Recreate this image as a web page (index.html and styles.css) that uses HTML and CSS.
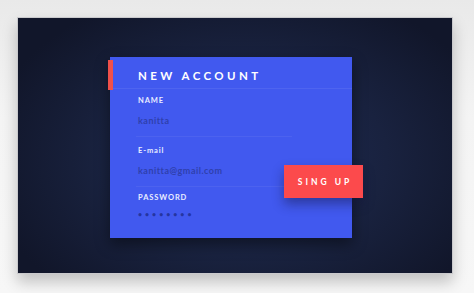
FILE: index.html
```
<!DOCTYPE html>
<html>
<head>
<meta charset="utf-8">
<link rel="stylesheet" href="styles.css">
</head>
<body>
<div class="stage">
  <div class="panel">
    <div class="card">
      <span class="accent"></span>
      <div class="title">NEW ACCOUNT</div>
      <div class="field f1">
        <div class="label">NAME</div>
        <div class="value">kanitta</div>
      </div>
      <div class="field f2">
        <div class="label">E-mail</div>
        <div class="value">kanitta@gmail.com</div>
      </div>
      <div class="field f3">
        <div class="label">PASSWORD</div>
        <div class="value dots">••••••••</div>
      </div>
      <button class="signup">SING UP</button>
    </div>
  </div>
</div>
</body>
</html>
```
FILE: styles.css
```
html, body {
  margin: 0;
  padding: 0;
}
body {
  width: 474px;
  height: 293px;
  overflow: hidden;
  background: linear-gradient(#e9e9e9, #f4f4f4 40%, #f7f7f7);
  font-family: "Lato", "Open Sans", sans-serif;
}
.stage {
  padding: 17px 0 0 17px;
}
.panel {
  width: 436px;
  height: 257px;
  border: 1px solid #c9c9cc;
  background: radial-gradient(ellipse 60% 70% at 52% 55%, #1f2c55 0%, #19223f 55%, #11162a 100%);
  box-shadow: 0 8px 14px rgba(0,0,0,0.22);
  padding: 39px 0 0 92px;
  box-sizing: border-box;
}
.card {
  position: relative;
  width: 242px;
  height: 181px;
  background: #4159ef;
  box-shadow: 0 6px 14px rgba(0,0,0,0.45);
}
.accent {
  position: absolute;
  left: -2px;
  top: 3px;
  width: 5px;
  height: 30px;
  background: #f0504a;
}
.title {
  padding-left: 28px;
  font-size: 11.5px;
  font-weight: 700;
  letter-spacing: 3.4px;
  color: #ffffff;
  border-bottom: 1px solid rgba(255,255,255,0.07);
  box-sizing: border-box;
  height: 32px;
  line-height: 38px;
}
.field {
  margin-left: 26px;
  width: 154px;
  padding-left: 2px;
}
.f1 {
  padding-top: 7px;
  padding-bottom: 10px;
  border-bottom: 1px solid rgba(255,255,255,0.06);
}
.f2 {
  padding-top: 9px;
  padding-bottom: 10px;
  border-bottom: 1px solid rgba(255,255,255,0.06);
}
.f3 {
  padding-top: 6px;
}
.label {
  height: 10px;
  line-height: 10px;
  font-size: 7.5px;
  font-weight: 700;
  letter-spacing: 0.9px;
  color: #e9edff;
}
.value {
  margin-top: 10px;
  height: 10px;
  line-height: 10px;
  font-size: 9px;
  font-weight: 700;
  letter-spacing: 0.5px;
  color: #2f40ad;
}
.dots {
  margin-top: 6px;
  font-size: 7px;
  letter-spacing: 3px;
  color: #2535a0;
}
.signup {
  position: absolute;
  left: 174px;
  top: 108px;
  width: 79px;
  height: 33px;
  border: none;
  padding: 0 0 0 3px;
  margin: 0;
  background: #fc4a4c;
  color: #fff;
  font-family: "Lato", "Open Sans", sans-serif;
  font-size: 8.5px;
  font-weight: 700;
  letter-spacing: 3px;
  box-shadow: 0 6px 12px rgba(20,20,60,0.45);
}
```
